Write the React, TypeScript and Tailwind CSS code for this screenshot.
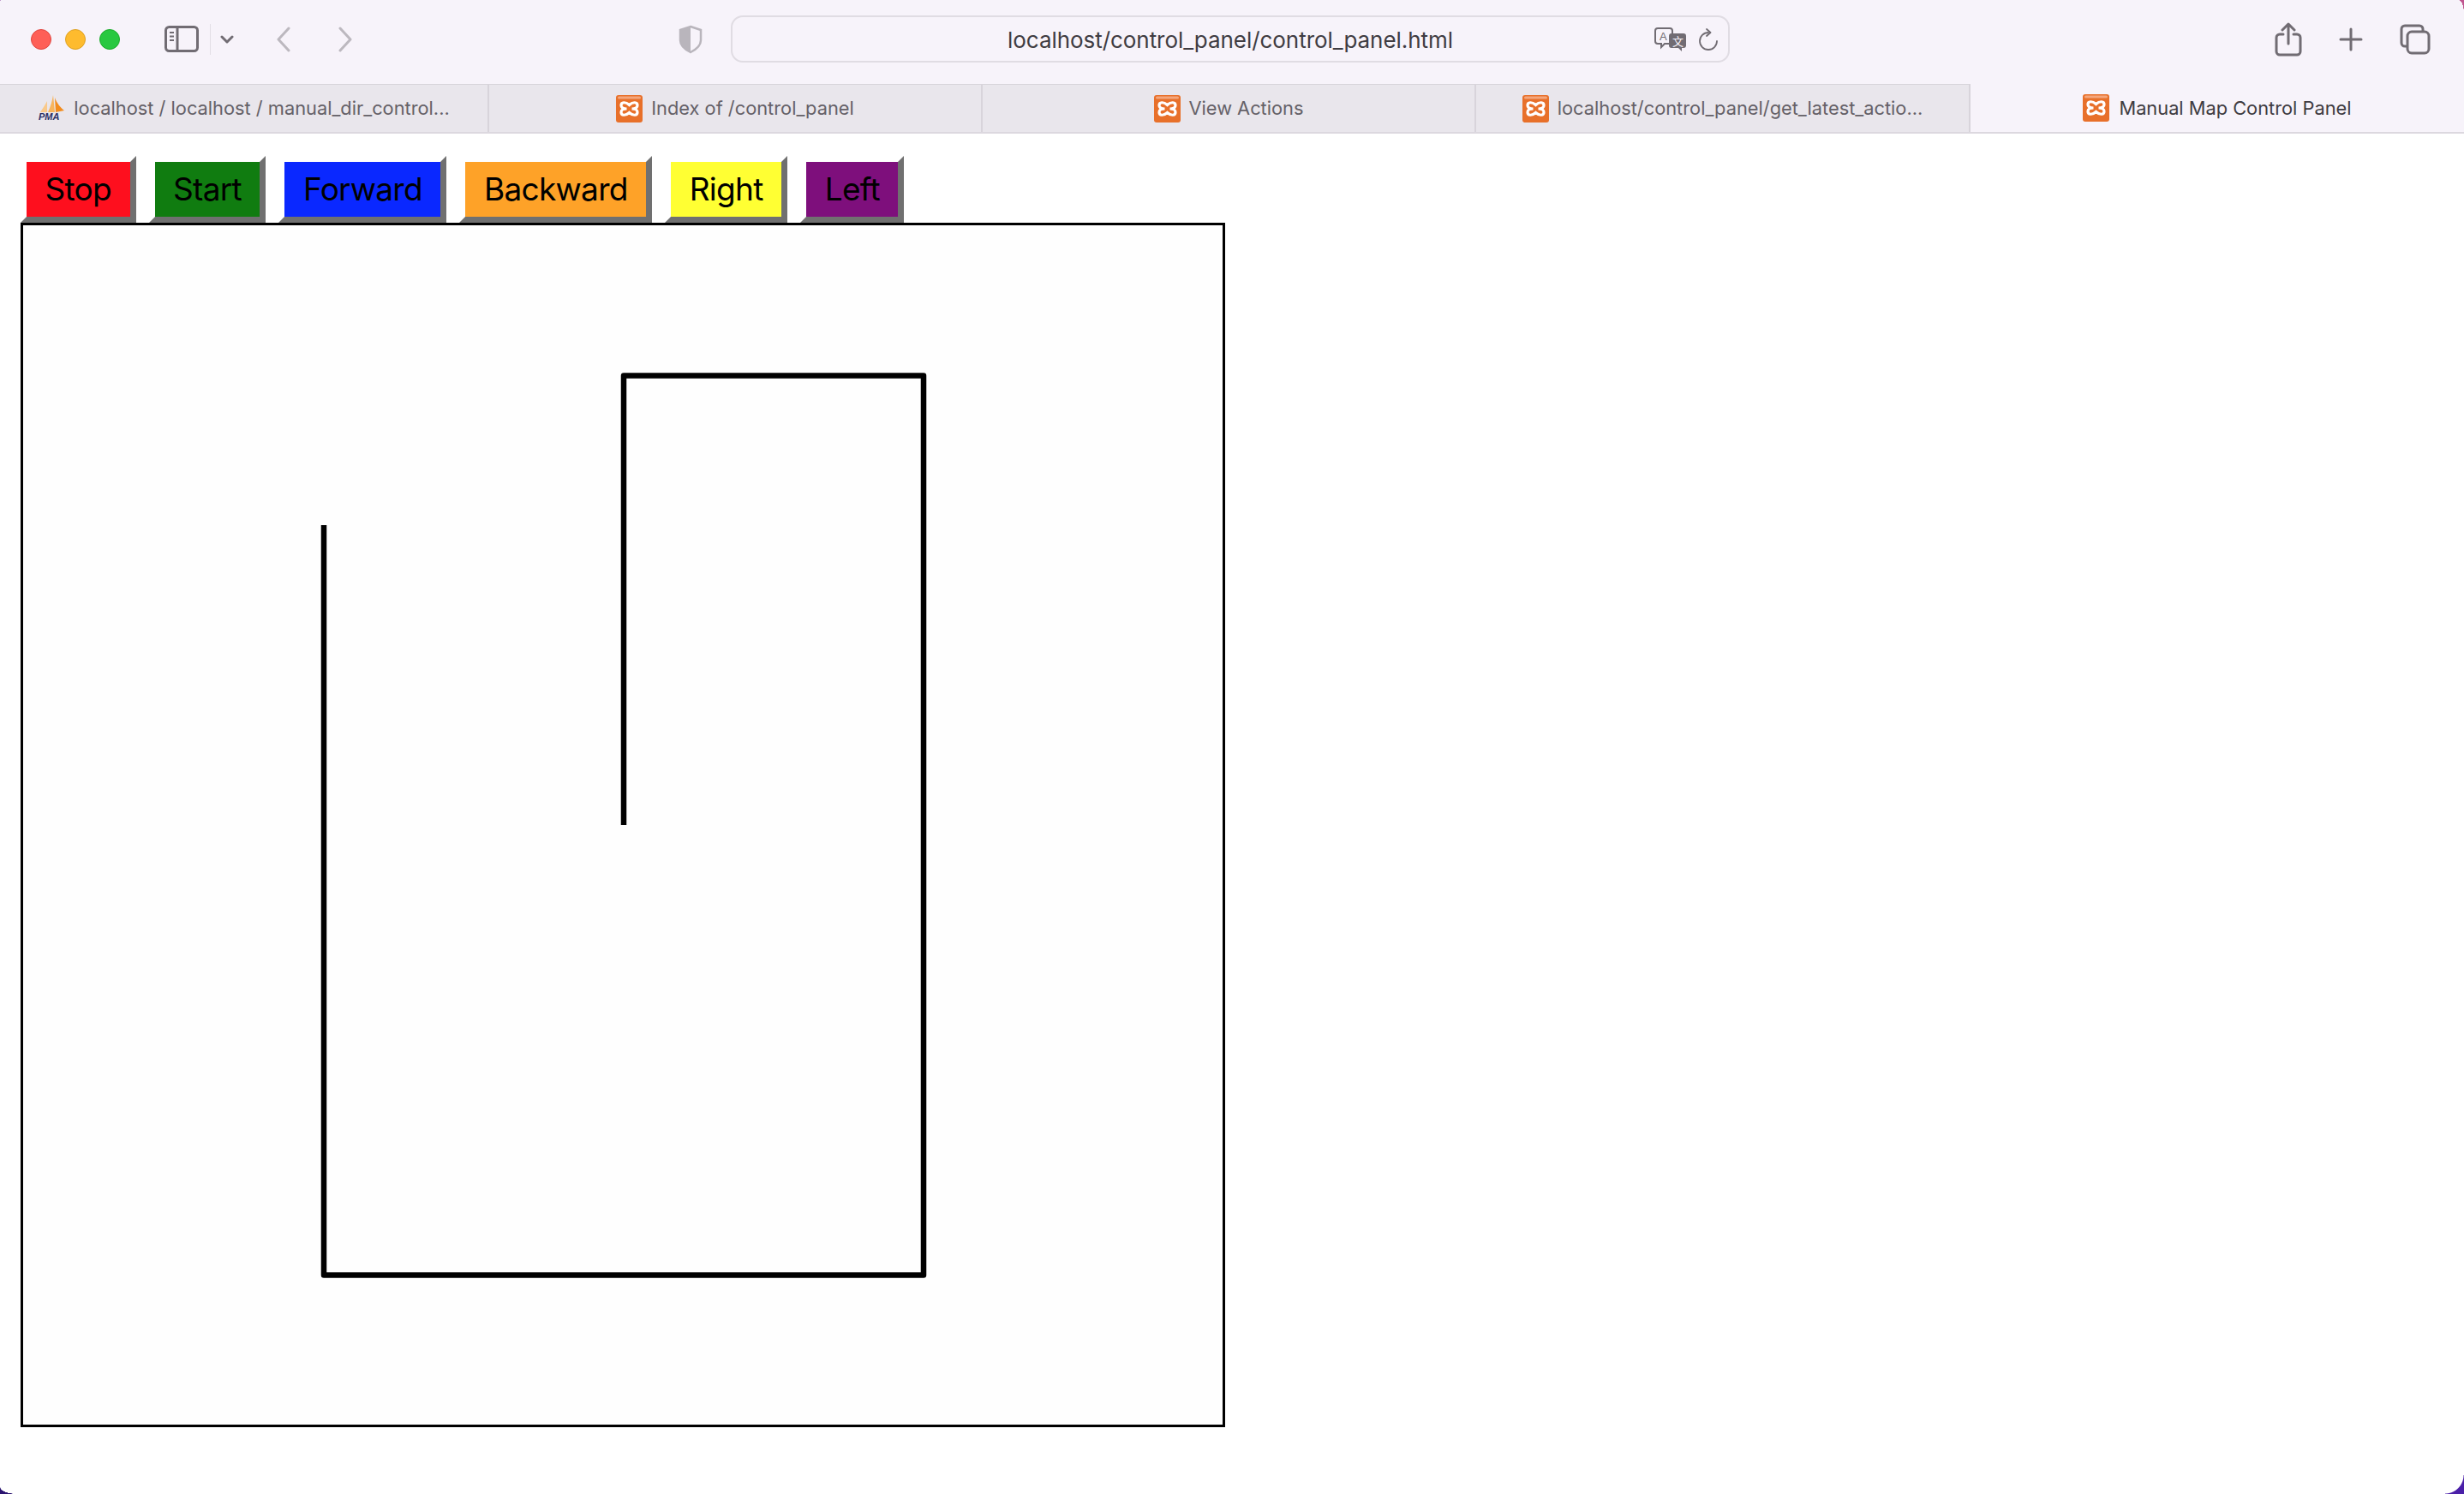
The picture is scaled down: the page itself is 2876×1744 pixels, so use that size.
const tabs = [
  { label: "localhost / localhost / manual_dir_control...", icon: "pma", width: "w-[571px]" },
  { label: "Index of /control_panel", icon: "xampp", width: "w-[576px]" },
  { label: "View Actions", icon: "xampp", width: "w-[576px]" },
  { label: "localhost/control_panel/get_latest_actio...", icon: "xampp", width: "w-[577px]" },
];

const buttons = [
  { label: "Stop", color: "bg-[#fe0f1e]" },
  { label: "Start", color: "bg-[#107c10]" },
  { label: "Forward", color: "bg-[#0a28ff]" },
  { label: "Backward", color: "bg-[#fea228]" },
  { label: "Right", color: "bg-[#ffff33]" },
  { label: "Left", color: "bg-[#7e0f7c]" },
];

function XamppIcon() {
  return (
    <svg width="31" height="32" viewBox="0 0 31 32" className="shrink-0">
      <rect width="31" height="32" rx="3" fill="#e8702a" />
      <rect x="2" y="1.500" width="27" height="3" rx="1.500" fill="#f4a67c" />
      <path
        d="M15.500 11.500C11 7.500 6 8 6 12c0 3 3 4 6.500 4C9 16 6 17 6 20c0 4 5 4.500 9.500.5 4.500 4 9.500 3.500 9.500-.5 0-3-3-4-6.500-4 3.500 0 6.500-1 6.500-4 0-4-5-4.500-9.500-.5Z"
        fill="none"
        stroke="#fff"
        strokeWidth="3.200"
      />
    </svg>
  );
}

function PmaIcon() {
  return (
    <svg width="32" height="32" viewBox="0 0 32 32" className="shrink-0">
      <path d="M3 20 C6 15 9 11 11 7 L11 20 Z" fill="#f9c98a" />
      <path d="M12 20 C15 13 17 7 18 0 L20 20 Z" fill="#f8b45c" />
      <path d="M20 3 C22 9 27 15 31 18 L21 20 Z" fill="#f28c1e" />
      <text
        x="1"
        y="28.500"
        fontSize="11"
        fontWeight="700"
        fontStyle="italic"
        fill="#2b2f66"
        fontFamily="'Liberation Sans', sans-serif"
      >
        PMA
      </text>
    </svg>
  );
}

function Toolbar() {
  return (
    <div className="h-[98px] pb-[7px] flex items-center bg-[#f7f3fa] relative">
      <div className="flex gap-4 ml-9">
        <span className="w-6 h-6 rounded-full bg-[#fe5f57] border border-[#e0443e]" />
        <span className="w-6 h-6 rounded-full bg-[#febb2e] border border-[#dea123]" />
        <span className="w-6 h-6 rounded-full bg-[#28c840] border border-[#1aab29]" />
      </div>

      <svg width="40" height="32" viewBox="0 0 40 32" className="ml-[52px]" fill="none" stroke="#716c73" strokeWidth="3">
        <rect x="1.500" y="1.500" width="37" height="28" rx="4" />
        <path d="M15 1.500v28" />
        <path d="M6 8h5M6 12.500h5M6 17h5" strokeWidth="2" />
      </svg>
      <div className="w-px h-9 bg-[#e3dfe6] ml-[13px]" />
      <svg width="16" height="10" viewBox="0 0 16 10" className="ml-[11px]" fill="none" stroke="#716c73" strokeWidth="3" strokeLinecap="round" strokeLinejoin="round">
        <path d="M2 2l6 6 6-6" />
      </svg>
      <svg width="18" height="30" viewBox="0 0 18 30" className="ml-[49px]" fill="none" stroke="#bcb8bf" strokeWidth="3" strokeLinecap="round" strokeLinejoin="round">
        <path d="M15 2L3 15l12 13" />
      </svg>
      <svg width="18" height="30" viewBox="0 0 18 30" className="ml-[54px]" fill="none" stroke="#bcb8bf" strokeWidth="3" strokeLinecap="round" strokeLinejoin="round">
        <path d="M3 2l12 13L3 28" />
      </svg>

      <svg width="28" height="34" viewBox="0 0 28 34" className="ml-[380px]">
        <path d="M14 2 L26 6 V18 C26 25 20 29 14 32 C8 29 2 25 2 18 V6 Z" fill="none" stroke="#b9b5bc" strokeWidth="2.500" />
        <path d="M14 2 L2 6 V18 C2 25 8 29 14 32 Z" fill="#b9b5bc" />
      </svg>

      <div className="ml-[33px] w-[1166px] h-[55px] pt-[2px] rounded-[14px] border-2 border-[#e0dce3] flex items-center justify-center relative">
        <span className="text-[26px] text-[#3f3c42] font-['Inter',sans-serif] tracking-[-0.05px]">
          localhost/control_panel/control_panel.html
        </span>
        <div className="absolute right-3 top-3 flex items-center gap-[14px]">
          <svg width="38" height="28" viewBox="0 0 38 28">
            <path d="M4 1h14a3 3 0 0 1 3 3v12a3 3 0 0 1-3 3H12l-4 4v-4H4a3 3 0 0 1-3-3V4a3 3 0 0 1 3-3Z" fill="#f7f3fa" stroke="#716c73" strokeWidth="2" />
            <text x="6" y="15" fontSize="13" fill="#716c73" fontFamily="'Liberation Sans', sans-serif">A</text>
            <path d="M20 7h14a3 3 0 0 1 3 3v11a3 3 0 0 1-3 3h-2v4l-4-4h-8a3 3 0 0 1-3-3V10a3 3 0 0 1 3-3Z" fill="#716c73" />
            <text x="21" y="21" fontSize="13" fill="#f7f3fa" fontFamily="'Noto Sans CJK SC', sans-serif">文</text>
          </svg>
          <svg width="22" height="26" viewBox="0 0 22 26" fill="none" stroke="#716c73" strokeWidth="1.800" strokeLinecap="round" strokeLinejoin="round">
            <path d="M11 5A10 10 0 1 0 21 15" />
            <path d="M9 1l4.500 4L9 9" />
          </svg>
        </div>
      </div>

      <div className="ml-auto mr-[39px] flex items-center">
        <svg width="32" height="40" viewBox="0 0 32 40" fill="none" stroke="#716c73" strokeWidth="3" strokeLinecap="round" strokeLinejoin="round">
          <path d="M10 14H6a4 4 0 0 0-4 4v16a4 4 0 0 0 4 4h20a4 4 0 0 0 4-4V18a4 4 0 0 0-4-4h-4" />
          <path d="M16 25V3M9 9l7-7 7 7" />
        </svg>
        <svg width="28" height="28" viewBox="0 0 28 28" className="ml-[43px]" fill="none" stroke="#716c73" strokeWidth="3" strokeLinecap="round">
          <path d="M14 2v24M2 14h24" />
        </svg>
        <svg width="36" height="36" viewBox="0 0 36 36" className="ml-[43px]" fill="none" stroke="#716c73" strokeWidth="3" strokeLinejoin="round">
          <path d="M8 26H6a4 4 0 0 1-4-4V6a4 4 0 0 1 4-4h17a4 4 0 0 1 4 4v3" />
          <rect x="9" y="9" width="25" height="25" rx="5" />
        </svg>
      </div>
    </div>
  );
}

function TabBar() {
  return (
    <div className="h-[58px] flex border-b-2 border-[#dcd8df] bg-[#e9e6ec] font-['Inter',sans-serif] text-[21.8px] text-[#656168]">
      {tabs.map((tab) => (
        <div
          key={tab.label}
          className={`${tab.width} flex items-center justify-center gap-[10px] border-r-2 border-r-[#d8d4db] border-t border-t-[#d8d4db] whitespace-nowrap`}
        >
          {tab.icon === "pma" ? <PmaIcon /> : <XamppIcon />}
          <span>{tab.label}</span>
        </div>
      ))}
      <div className="flex-1 bg-[#f7f3fa] text-[#3f3c42] flex items-center justify-center gap-[11px]">
        <XamppIcon />
        <span>Manual Map Control Panel</span>
      </div>
    </div>
  );
}

export default function App() {
  return (
    <div className="w-[2876px] h-[1744px] bg-white overflow-hidden relative">
      <Toolbar />
      <TabBar />

      <div className="pl-6 pt-[26px]">
        <div className="flex gap-[15px] font-['Inter',sans-serif] text-[37px] leading-[44px] tracking-[-0.7px] text-black">
          {buttons.map((b) => (
            <button
              key={b.label}
              className={`${b.color} h-[78px] px-[21.5px] border-[7px] border-t-white border-l-white border-r-[#707070] border-b-[#707070]`}
            >
              {b.label}
            </button>
          ))}
        </div>

        <div className="w-[1406px] h-[1406px] border-[3px] border-black bg-[#fefefe]">
          {/* drawn path of the robot */}
          <svg width="1400" height="1400" viewBox="0 0 1400 1400" className="block">
            <path
              d="M351 350V1225.500H1051V175.500H701V700"
              fill="none"
              stroke="#000"
              strokeWidth="6.500"
              strokeLinejoin="round"
            />
          </svg>
        </div>
      </div>

      {/* window corners showing the desktop behind */}
      <div className="absolute top-0 left-0 w-[3px] h-[3px] bg-[radial-gradient(circle_at_bottom_right,transparent_70%,#7a2a90_100%)]" />
      <div className="absolute top-0 right-0 w-[6px] h-4 bg-[radial-gradient(ellipse_6px_16px_at_bottom_left,transparent_97%,#c0558f_100%)]" />
      <div className="absolute bottom-0 left-0 w-5 h-2 bg-[radial-gradient(ellipse_20px_8px_at_top_right,transparent_97%,#2b1470_100%)]" />
      <div className="absolute bottom-0 right-0 w-[22px] h-[22px] bg-[radial-gradient(circle_at_top_left,transparent_21px,#4a1fa8_22px)]" />
    </div>
  );
}
